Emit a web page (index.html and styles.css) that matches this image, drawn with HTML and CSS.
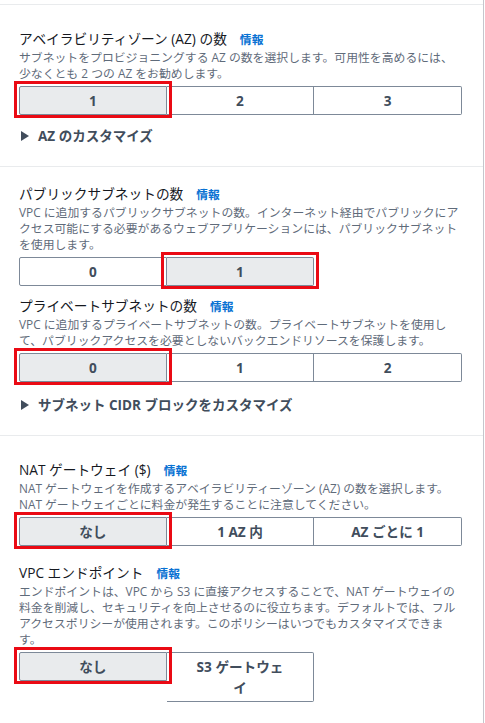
FILE: index.html
```html
<!DOCTYPE html>
<html lang="ja">
<head>
<meta charset="utf-8">
<title>VPC 設定</title>
<link rel="stylesheet" href="styles.css">
</head>
<body>
<div class="page">
  <section class="section sec-1">
    <div class="field">
      <div class="label">アベイラビリティゾーン (AZ) の数<a class="info" href="#">情報</a></div>
      <div class="desc">サブネットをプロビジョニングする AZ の数を選択します。可用性を高めるには、少なくとも 2 つの AZ をお勧めします。</div>
      <div class="seg">
        <button class="opt selected">1</button>
        <button class="opt">2</button>
        <button class="opt">3</button>
      </div>
    </div>
    <div class="expander exp-1">
      <svg class="caret" width="8" height="10" viewBox="0 0 8 10"><path d="M0 0 L8 5 L0 10 Z" fill="#414d5c"/></svg>
      <span>AZ のカスタマイズ</span>
    </div>
  </section>

  <section class="section sec-2">
    <div class="field">
      <div class="label">パブリックサブネットの数<a class="info" href="#">情報</a></div>
      <div class="desc">VPC に追加するパブリックサブネットの数。インターネット経由でパブリックにアクセス可能にする必要があるウェブアプリケーションには、パブリックサブネットを使用します。</div>
      <div class="seg">
        <button class="opt">0</button>
        <button class="opt selected">1</button>
      </div>
    </div>
    <div class="field field-next-a">
      <div class="label">プライベートサブネットの数<a class="info" href="#">情報</a></div>
      <div class="desc">VPC に追加するプライベートサブネットの数。プライベートサブネットを使用して、パブリックアクセスを必要としないバックエンドリソースを保護します。</div>
      <div class="seg">
        <button class="opt selected">0</button>
        <button class="opt">1</button>
        <button class="opt">2</button>
      </div>
    </div>
    <div class="expander exp-2">
      <svg class="caret" width="8" height="10" viewBox="0 0 8 10"><path d="M0 0 L8 5 L0 10 Z" fill="#414d5c"/></svg>
      <span>サブネット CIDR ブロックをカスタマイズ</span>
    </div>
  </section>

  <section class="section sec-3">
    <div class="field">
      <div class="label">NAT ゲートウェイ ($)<a class="info" href="#">情報</a></div>
      <div class="desc">NAT ゲートウェイを作成するアベイラビリティーゾーン (AZ) の数を選択します。NAT ゲートウェイごとに料金が発生することに注意してください。</div>
      <div class="seg">
        <button class="opt selected">なし</button>
        <button class="opt">1 AZ 内</button>
        <button class="opt">AZ ごとに 1</button>
      </div>
    </div>
    <div class="field field-next-b">
      <div class="label">VPC エンドポイント<a class="info" href="#">情報</a></div>
      <div class="desc">エンドポイントは、VPC から S3 に直接アクセスすることで、NAT ゲートウェイの料金を削減し、セキュリティを向上させるのに役立ちます。デフォルトでは、フルアクセスポリシーが使用されます。このポリシーはいつでもカスタマイズできます。</div>
      <div class="seg">
        <button class="opt selected">なし</button>
        <button class="opt">S3 ゲートウェイ</button>
      </div>
    </div>
  </section>
</div>
</body>
</html>
```

FILE: styles.css
```css
html, body {
  margin: 0;
  padding: 0;
  background: #ffffff;
}

body {
  font-family: "Open Sans", "Noto Sans CJK JP", sans-serif;
  color: #16191f;
}

.page {
  width: 484px;
  min-height: 723px;
  padding-top: 4px;
  border-right: 1px solid #c6c6cd;
  box-sizing: border-box;
}

.section {
  border-top: 1px solid #e9ebed;
  padding: 24px 21px 20px 19px;
}

.sec-2 {
  padding-top: 17px;
}

.field {
  display: flex;
  flex-direction: column;
}

.field-next-a {
  margin-top: 10px;
}

.field-next-b {
  margin-top: 17px;
}

.label {
  font-size: 13.7px;
  line-height: 20px;
  color: #16191f;
}

.info {
  margin-left: 13px;
  font-size: 11.8px;
  font-weight: 700;
  color: #0972d3;
  text-decoration: none;
}

.desc {
  margin-top: 0;
  font-size: 11.85px;
  line-height: 16px;
  color: #5f6b7a;
}

.seg {
  display: flex;
  align-items: flex-start;
  margin-top: 5px;
}

.opt {
  position: relative;
  width: calc(100% / 3);
  box-sizing: border-box;
  margin: 0;
  padding: 3px 24px;
  border: 1px solid #7d8998;
  border-left: none;
  background: #ffffff;
  font-family: "Open Sans", "Noto Sans CJK JP", sans-serif;
  font-size: 13.6px;
  font-weight: 700;
  line-height: 21px;
  color: #414d5c;
  text-align: center;
}

.opt:first-child {
  border-left: 1px solid #7d8998;
  border-radius: 2px 0 0 2px;
}

.opt:last-child {
  border-radius: 0 2px 2px 0;
}

.opt.selected {
  background: #e9ebed;
  z-index: 1;
}

.opt.selected::after {
  content: "";
  position: absolute;
  top: -6px;
  left: -6px;
  right: -6px;
  bottom: -4px;
  border: 3px solid #ea0a14;
  pointer-events: none;
}

.expander {
  display: flex;
  align-items: center;
  gap: 9px;
  font-size: 13.5px;
  font-weight: 700;
  line-height: 20px;
  color: #414d5c;
}

.caret {
  margin-left: 2px;
  flex: none;
}

.exp-1 {
  margin-top: 11px;
}

.exp-2 {
  margin-top: 13px;
}
```
